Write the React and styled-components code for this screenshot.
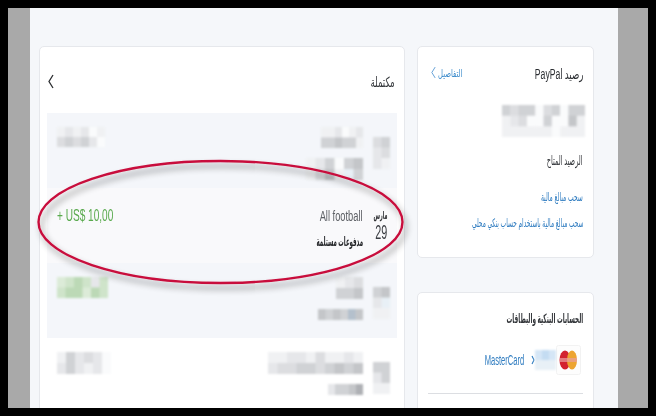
import React from "react";
import styled, { createGlobalStyle } from "styled-components";

const Global = createGlobalStyle`
  html, body { margin: 0; padding: 0; background: #000; }
  body { font-family: "Liberation Sans", "DejaVu Sans", sans-serif; }
`;

const Frame = styled.div`
  box-sizing: border-box;
  position: relative;
  width: 656px;
  height: 416px;
  border: 8px solid #000;
  background: #a9a9a9;
  padding: 0 30px 0 22px;
  overflow: hidden;
`;

const Page = styled.div`
  display: flex;
  align-items: flex-start;
  gap: 12px;
  height: 100%;
  padding: 38px 24px 0 9px;
  background: #f5f7fa;
  box-sizing: border-box;
`;

const Card = styled.section`
  box-sizing: border-box;
  background: #fff;
  border: 1px solid #e6e8ec;
  border-radius: 5px;
`;

const ActivityCard = styled(Card)`
  width: 366px;
  height: 420px;
  padding: 0 7px;
  flex: none;
`;

const SideColumn = styled.div`
  width: 177px;
  flex: none;
  display: flex;
  flex-direction: column;
  gap: 34px;
`;

const BalanceCard = styled(Card)`
  height: 212px;
  padding: 19px 10px 0 11px;
  display: flex;
  flex-direction: column;
  align-items: flex-end;
`;

const AccountsCard = styled(Card)`
  height: 140px;
  padding: 18px 10px 0 10px;
  display: flex;
  flex-direction: column;
  align-items: flex-end;
`;

const Text = styled.span`
  display: block;
  white-space: nowrap;
  font-size: ${(p) => p.$size || 12}px;
  line-height: ${(p) => p.$line || 16}px;
  font-weight: ${(p) => (p.$bold ? 700 : 400)};
  color: ${(p) => p.$color || "#3a3d42"};
  transform: scaleX(${(p) => p.$sx || 0.7});
  transform-origin: ${(p) => (p.$left ? "left" : "right")} center;
  filter: blur(0.3px);
`;

const ActivityHead = styled.div`
  height: 66px;
  display: flex;
  justify-content: space-between;
  align-items: center;
  padding: 3px 2px 0 1px;
  box-sizing: border-box;
`;

const Row = styled.div`
  box-sizing: border-box;
  height: 75px;
  display: flex;
  justify-content: space-between;
  padding: 14px 7px 0 10px;
  background: ${(p) => p.$bg || "#f4f6fa"};
`;

const HighlightRow = styled(Row)`
  background: #f9f9fb;
  padding-top: 20px;
`;

const RowEnd = styled.div`
  display: flex;
  gap: 10px;
  align-items: flex-start;
`;

const Description = styled.div`
  display: flex;
  flex-direction: column;
  align-items: flex-end;
  gap: ${(p) => p.$gap || 10}px;
`;

const DateBlock = styled.div`
  margin-top: 10px;
`;

const DateText = styled.div`
  display: flex;
  flex-direction: column;
  align-items: flex-end;
  width: 17px;
  margin: 1px 3px 0 -3px;
`;

const TitleRow = styled.div`
  width: 100%;
  display: flex;
  justify-content: space-between;
  align-items: center;
`;

const DetailsLink = styled.div`
  display: flex;
  align-items: center;
  gap: 2px;
  margin: -3px 0 0 2px;
`;

const Pad = styled.div`
  margin-top: ${(p) => p.$top}px;
  margin-right: ${(p) => p.$right || 0}px;
`;

const CardLine = styled.div`
  display: flex;
  align-items: center;
  margin-top: 18px;
  margin-right: 2px;
  height: 30px;
`;

const SmallChevron = styled.svg`
  display: block;
  flex: none;
  margin-left: 7px;
`;

const Divider = styled.hr`
  width: 155px;
  height: 1px;
  border: 0;
  background: #dcdee2;
  margin: 18px 0 0;
`;

const Ring = styled.svg`
  position: absolute;
  left: 22px;
  top: 144px;
  width: 400px;
  height: 150px;
  pointer-events: none;
  overflow: visible;
`;

const Pixelated = styled.svg`
  display: block;
  flex: none;
  filter: blur(0.8px);
`;

const Glyph = styled.svg`
  display: block;
  flex: none;
`;

const shades = {
  ".": "#fafbfc", a: "#f0f1f3", b: "#e6e7ea", c: "#dcdde0", d: "#d0d2d5", e: "#c4c6c9", f: "#b8babd", g: "#aeb0b4",
  h: "#b4c0cc", i: "#e8f0f6", j: "#dcebd8", k: "#cfe4ca", l: "#bcd9b6", m: "#d5e6f6", n: "#c4dcf2", _: "transparent",
};

function Mosaic({ rows, cw, ch }) {
  const w = rows[0].length * cw;
  const h = rows.length * ch;
  return (
    <Pixelated width={w} height={h} viewBox={`0 0 ${w} ${h}`} aria-hidden="true">
      {rows.map((r, y) =>
        r.split("").map((c, x) => (
          <rect key={`${x}-${y}`} x={x * cw} y={y * ch} width={cw + 0.5} height={ch + 0.5} fill={shades[c]} />
        ))
      )}
    </Pixelated>
  );
}

const Chevron = ({ color, w, h, sw }) => (
  <Glyph width={w} height={h} viewBox="0 0 6 15" aria-hidden="true">
    <polyline points="5,1 1,7.5 5,14" fill="none" stroke={color} strokeWidth={sw} />
  </Glyph>
);

const MasterLogo = () => (
  <Glyph width="25" height="30" viewBox="0 0 25 30" aria-hidden="true">
    <rect x="0.5" y="0.5" width="24" height="29" rx="2" fill="#fdfdfd" stroke="#f2f2f2" />
    <ellipse cx="9" cy="15" rx="5.5" ry="9.5" fill="#d3222f" />
    <ellipse cx="16" cy="15" rx="5" ry="9.5" fill="#eda531" />
    <rect x="4" y="13" width="17" height="4" fill="#e9a0a0" opacity="0.7" />
  </Glyph>
);

export default function App() {
  return (
    <Frame>
      <Global />
      <Page>
        <ActivityCard>
          <ActivityHead>
            <Chevron color="#2b2d30" w={6} h={15} sw={1.3} />
            <Text $size={14} $sx={0.61} $color="#33363a">مكتملة</Text>
          </ActivityHead>
          <Row>
            <Mosaic cw={8} ch={10} rows={["abab.a", "cdcdb."]} />
            <RowEnd>
              <Description>
                <Mosaic cw={7} ch={10.5} rows={["aab.ab", "ddedda"]} />
                <Mosaic cw={9.5} ch={11} rows={["abd.de", "aceaid"]} />
              </Description>
              <DateBlock>
                <Mosaic cw={8.5} ch={10.5} rows={["cd", "bc", "ba"]} />
              </DateBlock>
            </RowEnd>
          </Row>
          <HighlightRow>
            <Text $left $size={16} $sx={0.63} $color="#5aaa4e">+ US$ 10,00</Text>
            <RowEnd>
              <Description $gap={10}>
                <Text $size={14} $sx={0.665} $color="#5c5f64">All football</Text>
                <Text $size={13} $sx={0.42} $bold $color="#26282b">مدفوعات مستلمة</Text>
              </Description>
              <DateText>
                <Text $size={11} $line={13} $sx={0.43} $bold $color="#2e3033">مارس</Text>
                <Text $size={20} $line={20} $sx={0.54} $color="#3c3f44">29</Text>
              </DateText>
            </RowEnd>
          </HighlightRow>
          <Row>
            <Mosaic cw={8.5} ch={10.5} rows={["jklkbk", "klljlk"]} />
            <RowEnd>
              <Description $gap={10}>
                <Mosaic cw={9} ch={11} rows={["abc", "dde"]} />
                <Mosaic cw={7.5} ch={11} rows={["ededhe"]} />
              </Description>
              <DateBlock>
                <Mosaic cw={8.5} ch={10.5} rows={["de", "bi", "aa"]} />
              </DateBlock>
            </RowEnd>
          </Row>
          <Row $bg="#ffffff">
            <Mosaic cw={9} ch={11} rows={["adbcb.", "bdbab."]} />
            <RowEnd>
              <Description $gap={10}>
                <Mosaic cw={9.5} ch={11} rows={["aabbacaaba", "bccddcdede"]} />
                <Mosaic cw={7} ch={11} rows={["bddeg"]} />
              </Description>
              <DateBlock>
                <Mosaic cw={8.5} ch={10.5} rows={["dd", "bd", "aa"]} />
              </DateBlock>
            </RowEnd>
          </Row>
        </ActivityCard>

        <SideColumn>
          <BalanceCard>
            <TitleRow>
              <DetailsLink>
                <Chevron color="#4a90d0" w={5} h={13} sw={1} />
                <Text $left $size={11} $sx={0.62} $color="#3d8ccc">التفاصيل</Text>
              </DetailsLink>
              <Text dir="rtl" $size={14} $sx={0.62} $color="#2c2f33">رصيد PayPal</Text>
            </TitleRow>
            <Pad $top={23} $right={-2}>
              <Mosaic cw={8.3} ch={10.7} rows={["dcdd.cd.dd", "abc..d..ea", "aaaaaa.aaa"]} />
            </Pad>
            <Pad $top={16}>
              <Text $size={13} $sx={0.5} $color="#33363a">الرصيد المتاح</Text>
            </Pad>
            <Pad $top={20}>
              <Text $size={12} $sx={0.5} $color="#2f7cc0">سحب مبالغ مالية</Text>
            </Pad>
            <Pad $top={10}>
              <Text $size={12} $sx={0.49} $color="#2f7cc0">سحب مبالغ مالية باستخدام حساب بنكي محلي</Text>
            </Pad>
          </BalanceCard>
          <AccountsCard>
            <Text $size={13} $sx={0.44} $bold $color="#33363a">الحسابات البنكية والبطاقات</Text>
            <CardLine>
              <Text $size={14} $sx={0.54} $color="#2f7cc0">MasterCard</Text>
              <SmallChevron width="4" height="10" viewBox="0 0 4 10" aria-hidden="true">
                <polyline points="1,1 3,5 1,9" fill="none" stroke="#2f7cc0" strokeWidth="1.1" />
              </SmallChevron>
              <Mosaic cw={7} ch={10} rows={["mnm", "iii"]} />
              <MasterLogo />
            </CardLine>
            <Divider />
          </AccountsCard>
        </SideColumn>
      </Page>
      <Ring viewBox="0 0 400 150">
        <defs>
          <filter id="ringShadow" x="-5%" y="-15%" width="110%" height="135%">
            <feDropShadow dx="3" dy="5" stdDeviation="3" floodColor="#000" floodOpacity="0.45" />
          </filter>
        </defs>
        <ellipse cx="190.5" cy="70" rx="182" ry="61" fill="none" stroke="#c8103c" strokeWidth="2.4" filter="url(#ringShadow)" />
      </Ring>
    </Frame>
  );
}
